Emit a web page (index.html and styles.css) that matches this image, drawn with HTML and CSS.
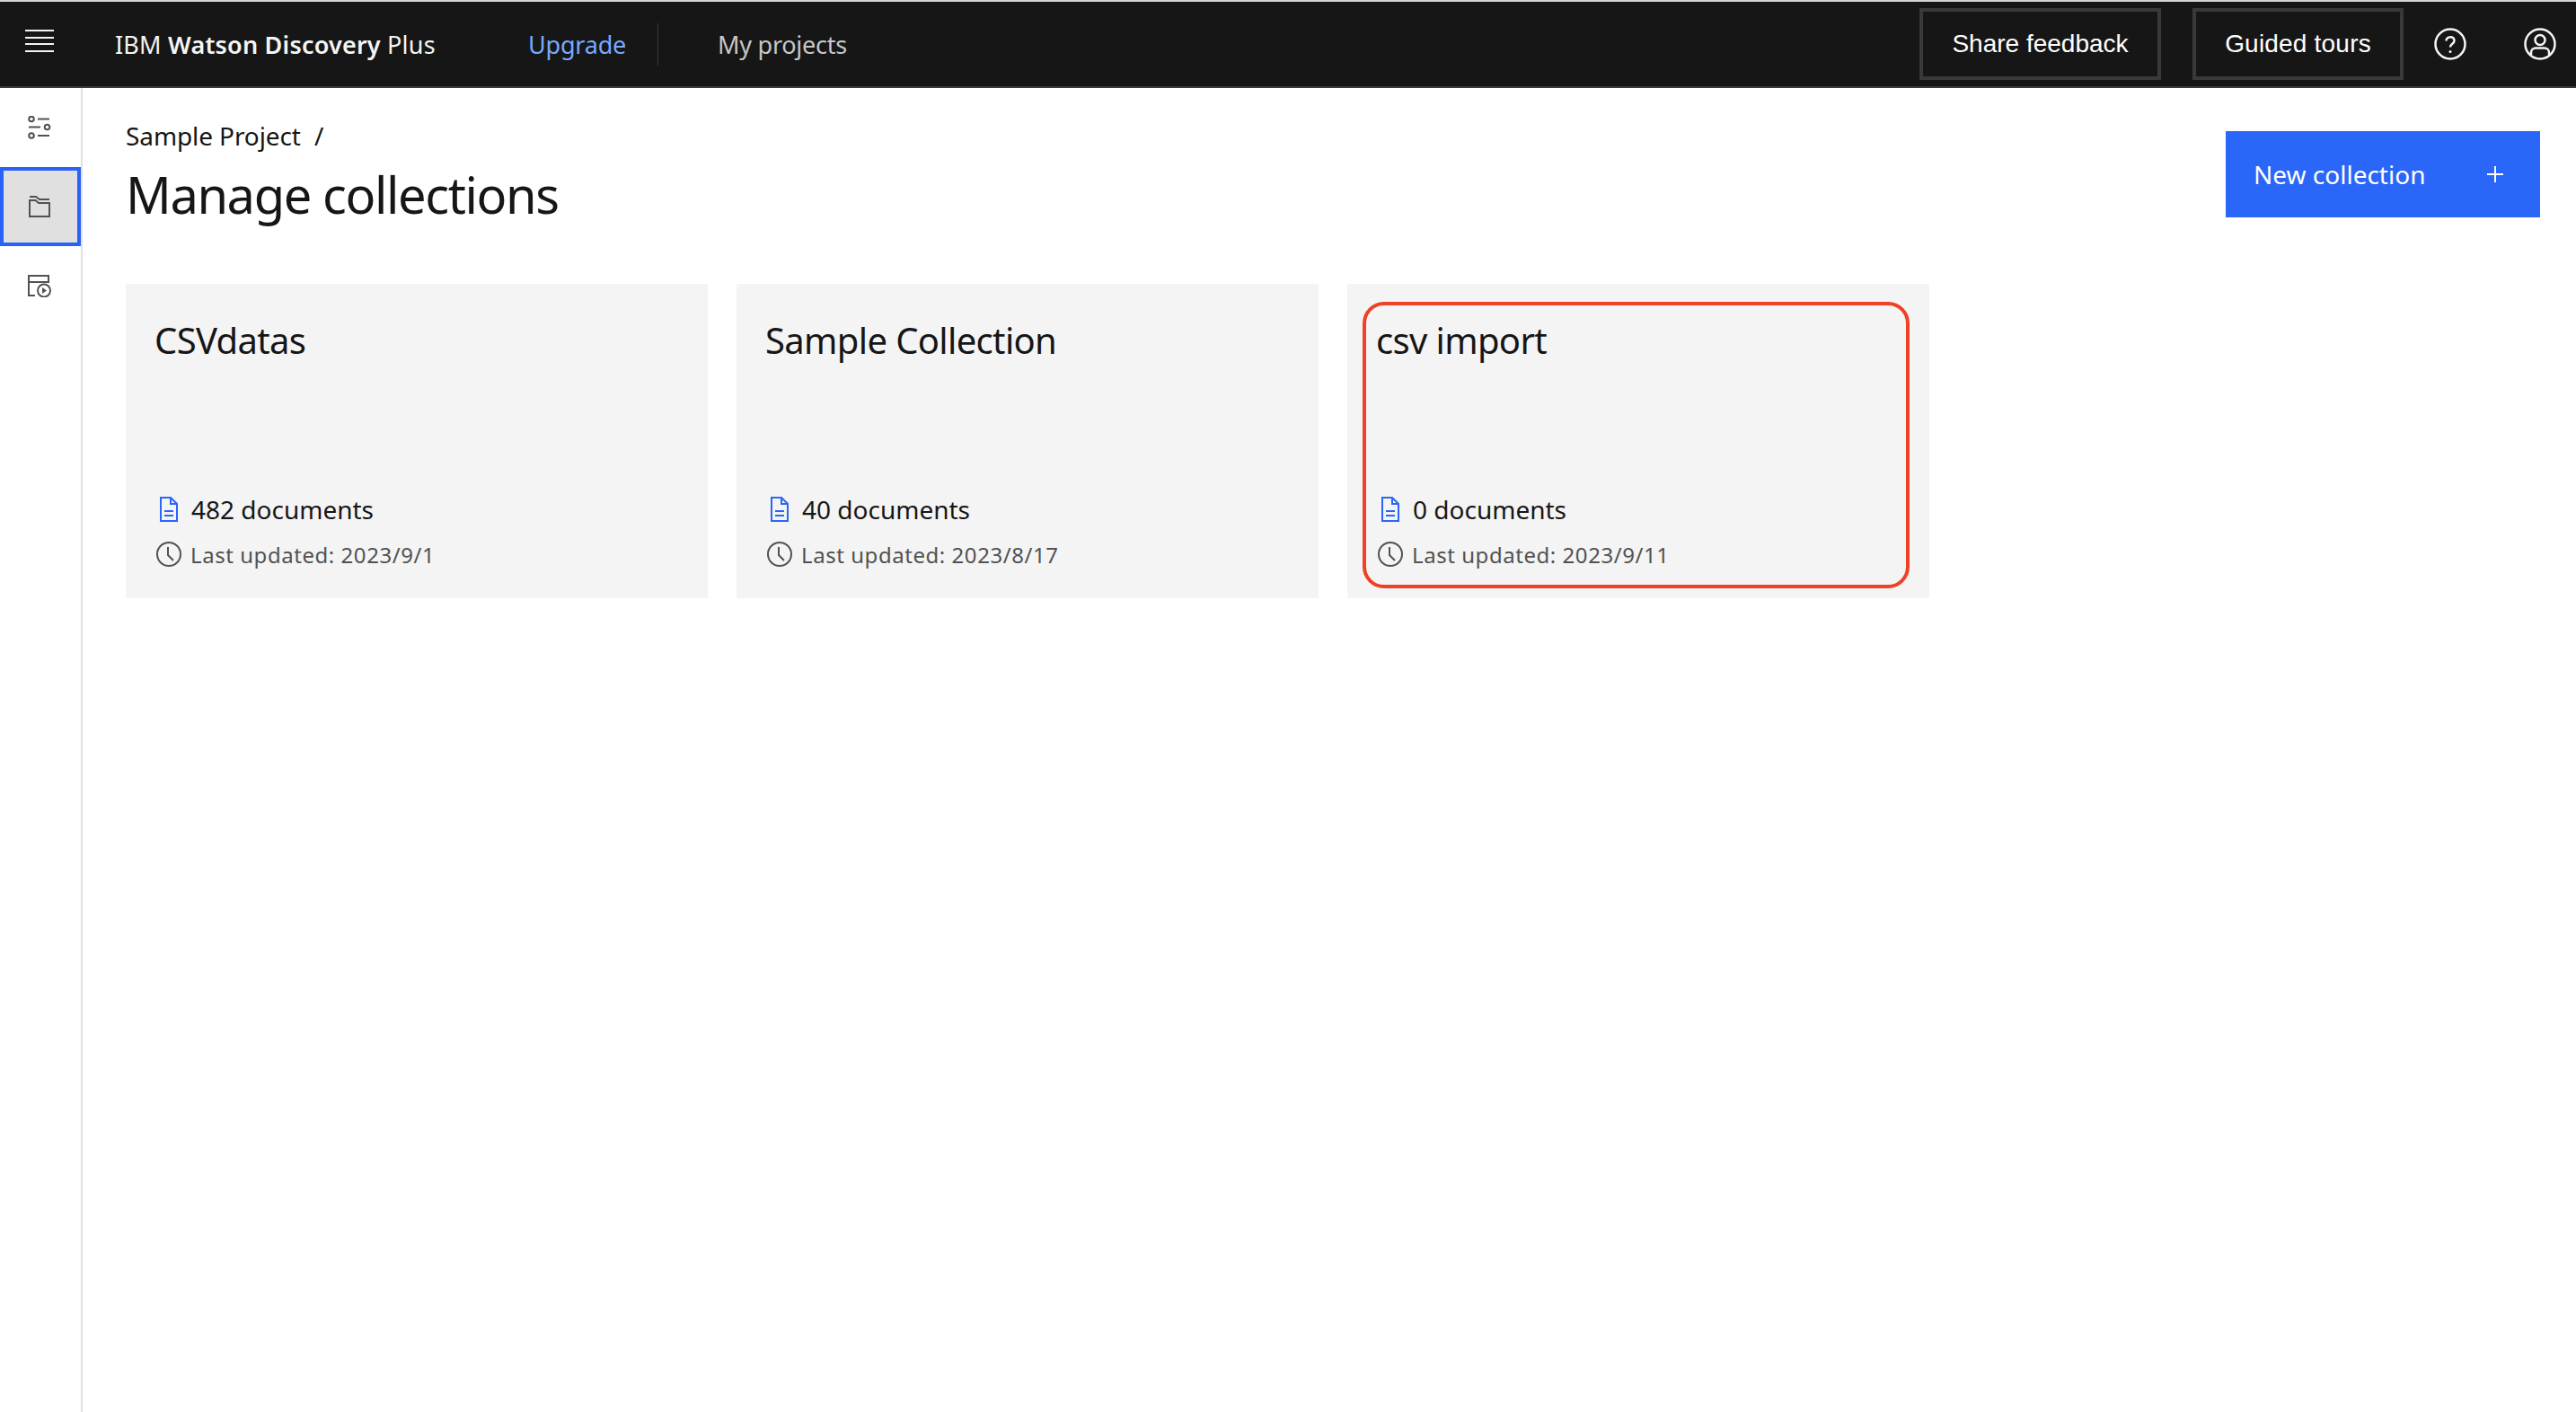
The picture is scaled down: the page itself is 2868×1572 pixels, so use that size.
FILE: index.html
```html
<!DOCTYPE html>
<html>
    <head>
        <title>Manage collections</title>
        <link rel="stylesheet" href="styles.css">
    </head>
    <body>
        <header class="topbar">
            <svg class="menu-icon" viewBox="0 0 32 25" width="32" height="25">
                <path d="M0 1h32M0 9h32M0 16h32M0 24h32"/>
            </svg>
            <div class="brand">IBM <b>Watson Discovery</b> Plus</div>
            <a class="nav-link upgrade">Upgrade</a>
            <div class="nav-divider"></div>
            <a class="nav-link projects">My projects</a>
            <div class="top-actions">
                <button class="outline-btn share">Share feedback</button>
                <button class="outline-btn tours">Guided tours</button>
                <svg class="top-icon help" viewBox="0 0 36 36" width="36" height="36">
                    <circle cx="18" cy="18" r="16.5"/>
                    <path d="M13.5 14.5c0-2.6 2-4.3 4.6-4.3 2.500 0 4.400 1.600 4.400 4 0 3.600-4.500 3.500-4.500 7.400"/>
                    <circle class="dot" cx="18" cy="26.500" r="1.500"/>
                </svg>
                <svg class="top-icon user" viewBox="0 0 36 36" width="36" height="36">
                    <circle cx="18" cy="18" r="16.500"/>
                    <circle cx="18" cy="13.500" r="5.500"/>
                    <path d="M8 30v-2.500c0-3 2.400-5 5-5h10c2.600 0 5 2 5 5V30"/>
                </svg>
            </div>
        </header>
        <div class="layout">
            <nav class="sidebar">
                <div class="side-item">
                    <svg class="side-icon" viewBox="0 0 26 26" width="26" height="26">
                        <circle cx="4" cy="3.500" r="2.800"/>
                        <circle cx="21.500" cy="12.500" r="2.800"/>
                        <circle cx="4" cy="22" r="2.800"/>
                        <path d="M11 3.500h13M1 12.500h13M11 22h13"/>
                    </svg>
                </div>
                <div class="side-item active">
                    <svg class="side-icon" viewBox="0 0 26 26" width="26" height="26">
                        <path d="M2 10v14h22V9H12L8.500 6H2z"/>
                        <path d="M2 2h7l4 3h11"/>
                    </svg>
                </div>
                <div class="side-item">
                    <svg class="side-icon" viewBox="0 0 26 26" width="26" height="26">
                        <path d="M8 24H1V2h22v8M1 9h22"/>
                        <circle cx="18" cy="18.500" r="7"/>
                        <path class="fill" d="M16 15v7l5-3.500z"/>
                    </svg>
                </div>
            </nav>
            <main class="content">
                <div class="page-head">
                    <div>
                        <div class="breadcrumb">Sample Project <span class="slash">/</span></div>
                        <h1 class="page-title">Manage collections</h1>
                    </div>
                    <button class="primary-btn">
                        <span>New collection</span>
                        <svg class="plus-icon" viewBox="0 0 18 18" width="18" height="18"><path d="M9 0v18M0 9h18"/></svg>
                    </button>
                </div>
                <div class="cards">
                    <div class="card">
                        <h2 class="card-title">CSVdatas</h2>
                        <div class="card-docs">
                            <svg class="doc-icon" viewBox="0 0 20 28" width="20" height="28">
                                <path d="M1 1v26h18V8l-7-7zM12 1v7h7M5 16h10M5 21h10"/>
                            </svg>
                            482 documents
                        </div>
                        <div class="card-date">
                            <svg class="clock-icon" viewBox="0 0 28 28" width="28" height="28">
                                <circle cx="14" cy="14" r="13"/><path d="M13 6v9l6 6"/>
                            </svg>
                            Last updated: 2023/9/1
                        </div>
                    </div>
                    <div class="card">
                        <h2 class="card-title">Sample Collection</h2>
                        <div class="card-docs">
                            <svg class="doc-icon" viewBox="0 0 20 28" width="20" height="28">
                                <path d="M1 1v26h18V8l-7-7zM12 1v7h7M5 16h10M5 21h10"/>
                            </svg>
                            40 documents
                        </div>
                        <div class="card-date">
                            <svg class="clock-icon" viewBox="0 0 28 28" width="28" height="28">
                                <circle cx="14" cy="14" r="13"/><path d="M13 6v9l6 6"/>
                            </svg>
                            Last updated: 2023/8/17
                        </div>
                    </div>
                    <div class="card marked">
                        <h2 class="card-title">csv import</h2>
                        <div class="card-docs">
                            <svg class="doc-icon" viewBox="0 0 20 28" width="20" height="28">
                                <path d="M1 1v26h18V8l-7-7zM12 1v7h7M5 16h10M5 21h10"/>
                            </svg>
                            0 documents
                        </div>
                        <div class="card-date">
                            <svg class="clock-icon" viewBox="0 0 28 28" width="28" height="28">
                                <circle cx="14" cy="14" r="13"/><path d="M13 6v9l6 6"/>
                            </svg>
                            Last updated: 2023/9/11
                        </div>
                        <div class="red-mark"></div>
                    </div>
                </div>
            </main>
        </div>
    </body>
</html>
```

FILE: styles.css
```css
* {
  box-sizing: border-box;
}
html, body {
  height: 100%;
}
body {
  margin: 0;
  display: flex;
  flex-direction: column;
  background-color: #fff;
  color: #161616;
  font-family: "Noto Sans", "Liberation Sans", sans-serif;
}
svg {
  fill: none;
  flex: none;
}

/*top bar*/
.topbar {
  height: 98px;
  flex: none;
  display: flex;
  align-items: center;
  padding-left: 28px;
  padding-right: 22px;
  background-color: #161616;
  border-top: 2px solid #d4d4d4;
  border-bottom: 2px solid #393939;
  color: #f4f4f4;
  font-size: 27px;
}
.menu-icon {
  margin-bottom: 7px;
  stroke: #f4f4f4;
  stroke-width: 2;
}
.brand {
  margin-left: 68px;
  width: 461px;
  white-space: nowrap;
  letter-spacing: 0.2px;
}
.brand b {
  font-weight: 600;
}
.nav-link {
  white-space: nowrap;
}
.upgrade {
  width: 143px;
  margin-left: -1px;
  margin-right: 1px;
  color: #78a9ff;
  letter-spacing: -0.2px;
}
.nav-divider {
  width: 1px;
  height: 47px;
  background-color: #393939;
}
.projects {
  margin-left: 66px;
  color: #c6c6c6;
  letter-spacing: -0.25px;
}
.top-actions {
  margin-left: auto;
  display: flex;
  align-items: center;
}
.outline-btn {
  height: 80px;
  padding: 0;
  background-color: #161616;
  border: 4px solid #393939;
  color: #fff;
  font-family: "Liberation Sans", sans-serif;
  font-size: 28px;
}
.share {
  width: 269px;
  margin-right: 35px;
}
.tours {
  width: 235px;
  margin-right: 34px;
  letter-spacing: 0.2px;
}
.top-icon {
  stroke: #f4f4f4;
  stroke-width: 2.500;
}
.top-icon .dot {
  fill: #f4f4f4;
  stroke: none;
}
.help {
  margin-right: 64px;
}

/*layout*/
.layout {
  flex: 1;
  display: flex;
}
.sidebar {
  width: 92px;
  flex: none;
  border-right: 2px solid #e0e0e0;
}
.side-item {
  height: 88px;
  display: flex;
  align-items: center;
  justify-content: center;
  padding-right: 2px;
}
.side-item.active {
  background-color: #e0e0e0;
  border: 4px solid #2962f6;
}
.side-icon {
  stroke: #525252;
  stroke-width: 2;
}
.side-icon .fill {
  fill: #525252;
  stroke: none;
}

/*content*/
.content {
  flex: 1;
  padding-left: 48px;
  padding-right: 40px;
}
.page-head {
  display: flex;
  justify-content: space-between;
  align-items: flex-start;
  height: 218px;
}
.breadcrumb {
  margin-top: 34px;
  font-size: 28px;
  line-height: 38px;
  white-space: pre;
  letter-spacing: -0.1px;
}
.slash {
  margin-left: 8px;
}
.page-title {
  margin: 10px 0 0 0;
  font-size: 56px;
  font-weight: 400;
  line-height: 72px;
  letter-spacing: -1.4px;
}
.primary-btn {
  width: 350px;
  height: 96px;
  margin-top: 48px;
  padding: 0 41px 0 31px;
  display: flex;
  align-items: center;
  justify-content: space-between;
  background-color: #2a66f8;
  border: none;
  color: #fff;
  font-family: inherit;
  font-size: 28px;
}
.plus-icon {
  stroke: #fff;
  stroke-width: 2;
}

/*cards*/
.cards {
  display: flex;
  gap: 32px;
}
.card {
  position: relative;
  width: 648px;
  height: 350px;
  padding: 37px 32px 0 32px;
  background-color: #f4f4f4;
}
.card-title {
  margin: 0;
  height: 189px;
  font-size: 40px;
  font-weight: 400;
  line-height: 52px;
  letter-spacing: -0.65px;
}
.card-docs {
  display: flex;
  align-items: center;
  height: 50px;
  font-size: 28px;
}
.card-date {
  display: flex;
  align-items: center;
  height: 50px;
  color: #525252;
  font-size: 24px;
  letter-spacing: 0.55px;
}
.doc-icon {
  margin-left: 6px;
  margin-right: 15px;
  stroke: #2a66f8;
  stroke-width: 2;
}
.clock-icon {
  margin-left: 2px;
  margin-right: 10px;
  stroke: #525252;
  stroke-width: 2;
}
.red-mark {
  position: absolute;
  left: 17px;
  top: 20px;
  width: 609px;
  height: 319px;
  border: 4px solid #ee4126;
  border-radius: 24px;
}
```
